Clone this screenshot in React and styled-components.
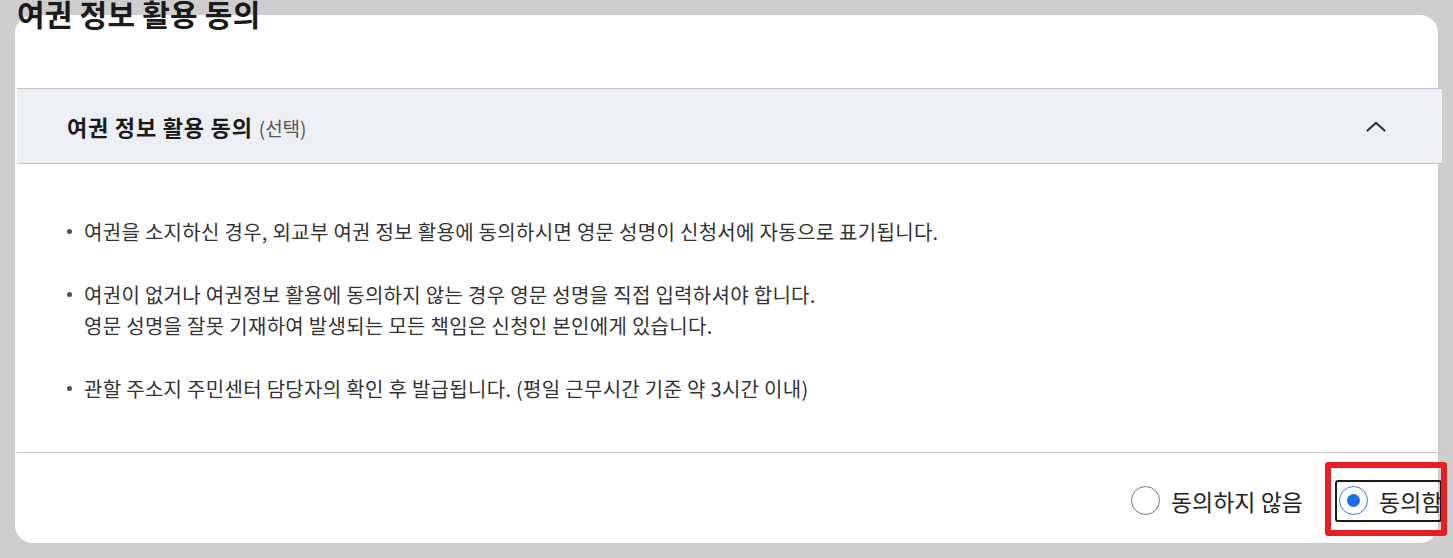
import React from "react";
import styled, { createGlobalStyle } from "styled-components";

const Global = createGlobalStyle`
  html, body { margin: 0; padding: 0; background: #cdcdcd; }
  body {
    font-family: "Noto Sans CJK KR", "Noto Sans", sans-serif;
    color: #222;
    overflow: hidden;
  }
`;

const Page = styled.div`
  width: 1453px;
  height: 558px;
  padding: 0 15px 15px 15px;
  box-sizing: border-box;
  display: flex;
  flex-direction: column;
`;

const PageTitle = styled.h1`
  position: relative;
  z-index: 1;
  margin: -6px 0 0 2px;
  height: 21px;
  font-size: 30px;
  font-weight: 700;
  line-height: 38px;
  letter-spacing: 0.2px;
  color: #1b1b1b;
  white-space: nowrap;
`;

const Card = styled.section`
  background: #fff;
  border-radius: 18px;
  width: 1423px;
  height: 528px;
  padding-top: 73px;
  box-sizing: border-box;
  display: flex;
  flex-direction: column;
`;

const Inner = styled.div`
  margin-left: 2px;
  width: 1425px;
  display: flex;
  flex-direction: column;
  flex: 1;
`;

const Header = styled.div`
  height: 74px;
  background: #eceff4;
  border-top: 1px solid #c6c6c6;
  border-bottom: 1px solid #c6c6c6;
  display: flex;
  align-items: center;
  justify-content: space-between;
  padding: 0 56px 0 50px;
`;

const HeaderTitle = styled.h2`
  margin: 0;
  font-size: 22px;
  font-weight: 700;
  color: #1a1a1a;
  letter-spacing: 0.8px;
`;

const Optional = styled.span`
  font-size: 19px;
  font-weight: 400;
  color: #555;
  letter-spacing: 0;
  margin-left: 6px;
`;

const Toggle = styled.button`
  border: 0;
  background: transparent;
  padding: 0;
  width: 20px;
  height: 12px;
  display: flex;
  align-items: center;
  justify-content: center;
  cursor: pointer;
`;

const Body = styled.ul`
  list-style: none;
  margin: 0;
  padding: 52px 0 0 50px;
  height: 289px;
  box-sizing: border-box;
  border-bottom: 1px solid #c6c6c6;
  display: flex;
  flex-direction: column;
  gap: 32px;
`;

const Item = styled.li`
  position: relative;
  padding-left: 17px;
  font-size: 20px;
  line-height: 31px;
  letter-spacing: 0.3px;
  color: #333;
  &::before {
    content: "";
    position: absolute;
    left: 0;
    top: 13px;
    width: 5px;
    height: 5px;
    border-radius: 50%;
    background: #505050;
  }
`;

const Footer = styled.div`
  flex: 1;
  display: flex;
  align-items: center;
  justify-content: flex-end;
  gap: 32px;
  margin-top: 5px;
`;

const Option = styled.label`
  position: relative;
  display: flex;
  align-items: center;
  gap: 11px;
  font-size: 23px;
  color: #222;
  height: 42px;
  box-sizing: border-box;
  white-space: nowrap;
  padding: ${(p) => (p.$focused ? "0 2px" : "0")};
  width: ${(p) => (p.$focused ? "107px" : "auto")};
  border: ${(p) => (p.$focused ? "2px solid #1a1a1a" : "0")};
  border-radius: 3px;
  cursor: pointer;
`;

const Circle = styled.span`
  flex: none;
  width: 29px;
  height: 29px;
  box-sizing: border-box;
  border-radius: 50%;
  border: 1px solid ${(p) => (p.$checked ? "#3a7be0" : "#767676")};
  background: #fff;
  display: flex;
  align-items: center;
  justify-content: center;
  &::after {
    content: "";
    display: ${(p) => (p.$checked ? "block" : "none")};
    width: 13px;
    height: 13px;
    border-radius: 50%;
    background: #1f6ae6;
  }
`;

const Highlight = styled.span`
  position: absolute;
  left: -12px;
  top: -20px;
  width: 122px;
  height: 74px;
  box-sizing: border-box;
  border: 6px solid #e81e26;
  border-radius: 3px;
  pointer-events: none;
`;

export default function App() {
  const [agree, setAgree] = React.useState(true);
  return (
    <Page>
      <Global />
      <PageTitle>여권 정보 활용 동의</PageTitle>
      <Card>
        <Inner>
          <Header>
            <HeaderTitle>
              여권 정보 활용 동의<Optional>(선택)</Optional>
            </HeaderTitle>
            <Toggle aria-label="접기">
              <svg width="20" height="11" viewBox="0 0 20 11" fill="none">
                <path d="M1.5 9.5 L10 1.8 L18.5 9.5" stroke="#333" strokeWidth="2.2" strokeLinecap="round" strokeLinejoin="round" />
              </svg>
            </Toggle>
          </Header>
          <Body>
            <Item>여권을 소지하신 경우, 외교부 여권 정보 활용에 동의하시면 영문 성명이 신청서에 자동으로 표기됩니다.</Item>
            <Item>
              여권이 없거나 여권정보 활용에 동의하지 않는 경우 영문 성명을 직접 입력하셔야 합니다.
              <br />
              영문 성명을 잘못 기재하여 발생되는 모든 책임은 신청인 본인에게 있습니다.
            </Item>
            <Item>관할 주소지 주민센터 담당자의 확인 후 발급됩니다. (평일 근무시간 기준 약 3시간 이내)</Item>
          </Body>
          <Footer>
            <Option onClick={() => setAgree(false)}>
              <Circle $checked={!agree} />
              동의하지 않음
            </Option>
            <Option $focused onClick={() => setAgree(true)}>
              <Circle $checked={agree} />
              동의함
              <Highlight />
            </Option>
          </Footer>
        </Inner>
      </Card>
    </Page>
  );
}
